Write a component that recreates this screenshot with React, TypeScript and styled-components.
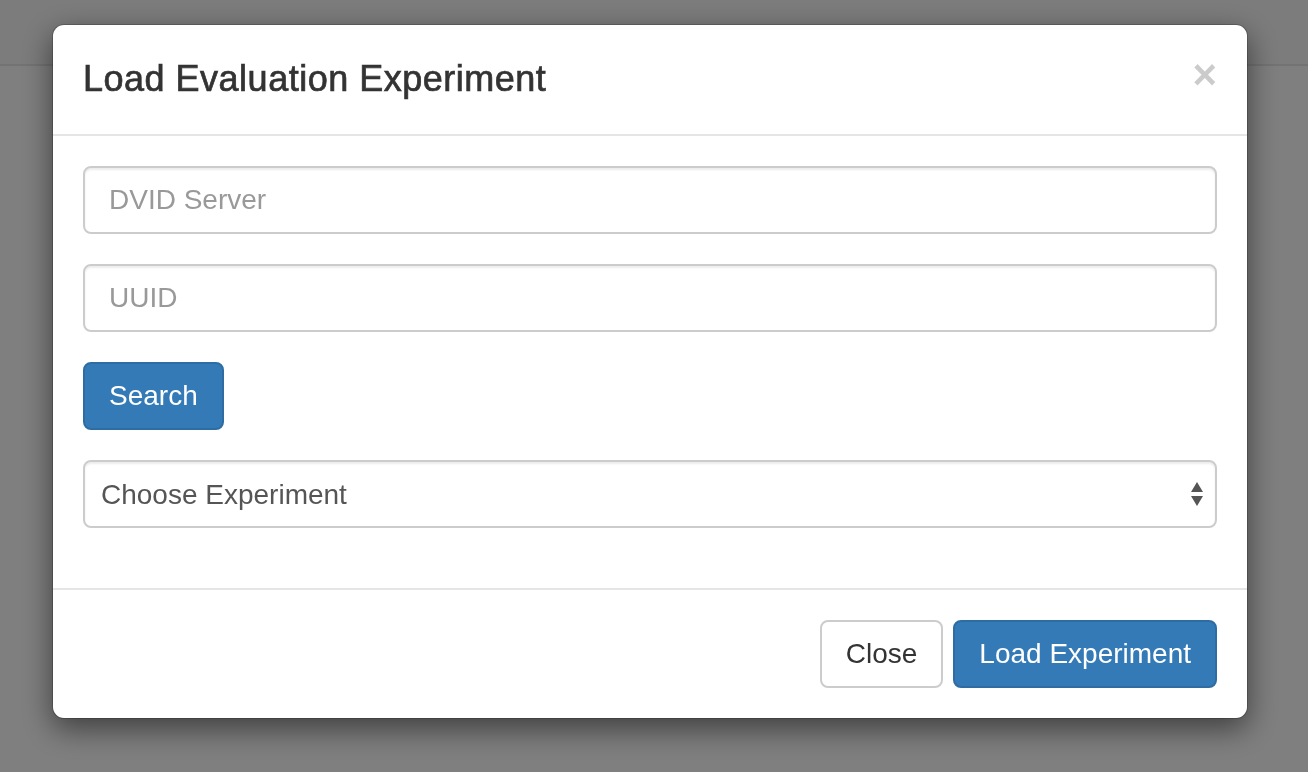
import React from 'react';
import styled, { createGlobalStyle } from 'styled-components';

const GlobalStyle = createGlobalStyle`
  html, body {
    margin: 0;
    padding: 0;
    height: 100%;
    background: #ffffff;
    font-family: "Liberation Sans", Arial, Helvetica, sans-serif;
    color: #333;
  }
  * { box-sizing: border-box; }
`;

const Navbar = styled.div`
  height: 66px;
  background: #f8f8f8;
  border-bottom: 2px solid #e7e7e7;
`;

const Backdrop = styled.div`
  position: fixed;
  inset: 0;
  background: rgba(0, 0, 0, 0.5);
`;

const ModalLayer = styled.div`
  position: fixed;
  inset: 0;
  display: flex;
  justify-content: center;
  align-items: flex-start;
  padding: 24px 8px 0 0;
`;

const Dialog = styled.div`
  width: 1196px;
  background: #fff;
  border: 1px solid rgba(0, 0, 0, 0.2);
  border-radius: 12px;
  box-shadow: 0 10px 30px rgba(0, 0, 0, 0.5);
  background-clip: padding-box;
`;

const Header = styled.div`
  display: flex;
  justify-content: space-between;
  align-items: flex-start;
  padding: 29px 30px 30px;
  border-bottom: 2px solid #e5e5e5;
`;

const Title = styled.h4`
  margin: 0;
  font-size: 36px;
  line-height: 50px;
  font-weight: 500;
  letter-spacing: 0.5px;
  color: #333;
  -webkit-text-stroke: 0.7px #333;
`;

const CloseX = styled.button`
  border: 0;
  background: transparent;
  padding: 0;
  margin-top: 0;
  font-family: "Liberation Sans", Arial, sans-serif;
  font-size: 42px;
  font-weight: bold;
  line-height: 1;
  color: #000;
  opacity: 0.2;
  text-shadow: 0 2px 0 #fff;
  cursor: pointer;
`;

const Body = styled.div`
  padding: 30px;
`;

const FormGroup = styled.div`
  margin-bottom: 30px;
`;

const Input = styled.input`
  display: block;
  width: 100%;
  height: 68px;
  padding: 12px 24px;
  font-family: inherit;
  font-size: 28px;
  color: #555;
  background: #fff;
  border: 2px solid #ccc;
  border-radius: 8px;
  box-shadow: inset 0 2px 2px rgba(0, 0, 0, 0.075);
  outline: none;

  &::placeholder {
    color: #999;
  }
`;

const SelectWrap = styled.div`
  position: relative;
`;

const Select = styled.select`
  display: block;
  width: 100%;
  height: 68px;
  padding: 0 60px 0 16px;
  font-family: inherit;
  font-size: 28px;
  color: #555;
  background: #fff;
  border: 2px solid #ccc;
  border-radius: 8px;
  box-shadow: inset 0 2px 2px rgba(0, 0, 0, 0.075);
  appearance: none;
  -webkit-appearance: none;
  outline: none;
`;

const Arrows = styled.svg`
  position: absolute;
  right: 14px;
  top: 50%;
  transform: translateY(-50%);
  pointer-events: none;
`;

const Button = styled.button<{ $primary?: boolean }>`
  display: inline-block;
  height: 68px;
  padding: 12px 24px;
  font-family: inherit;
  font-size: 28px;
  line-height: 40px;
  border-radius: 8px;
  cursor: pointer;
  border: 2px solid ${(p) => (p.$primary ? '#2e6da4' : '#ccc')};
  background: ${(p) => (p.$primary ? '#337ab7' : '#fff')};
  color: ${(p) => (p.$primary ? '#fff' : '#333')};
`;

const Footer = styled.div`
  display: flex;
  justify-content: flex-end;
  gap: 10px;
  padding: 30px;
  border-top: 2px solid #e5e5e5;
`;

const App = () => {
  return (
    <>
      <GlobalStyle />
      <Navbar />
      <Backdrop />
      <ModalLayer>
        <Dialog>
          <Header>
            <Title>Load Evaluation Experiment</Title>
            <CloseX aria-label="Close">×</CloseX>
          </Header>
          <Body>
            <FormGroup>
              <Input placeholder="DVID Server" />
            </FormGroup>
            <FormGroup>
              <Input placeholder="UUID" />
            </FormGroup>
            <FormGroup>
              <Button $primary>Search</Button>
            </FormGroup>
            <FormGroup>
              <SelectWrap>
                <Select defaultValue="">
                  <option value="">Choose Experiment</option>
                </Select>
                <Arrows width="12" height="24" viewBox="0 0 12 24">
                  <path d="M6 0 L12 10 L0 10 Z" fill="#555" />
                  <path d="M0 14 L12 14 L6 24 Z" fill="#555" />
                </Arrows>
              </SelectWrap>
            </FormGroup>
          </Body>
          <Footer>
            <Button>Close</Button>
            <Button $primary>Load Experiment</Button>
          </Footer>
        </Dialog>
      </ModalLayer>
    </>
  );
};

export default App;
